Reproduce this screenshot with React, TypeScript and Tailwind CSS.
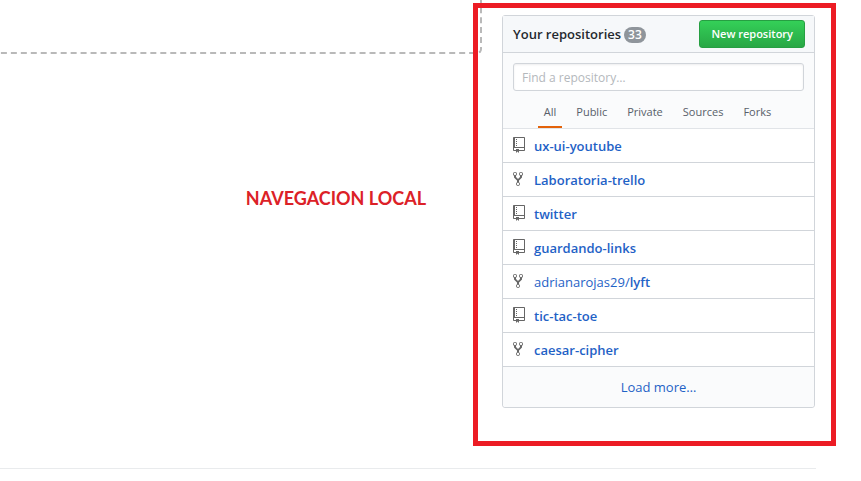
type Repo = { name: string; owner?: string; fork?: boolean };

const repos: Repo[] = [
  { name: "ux-ui-youtube" },
  { name: "Laboratoria-trello", fork: true },
  { name: "twitter" },
  { name: "guardando-links" },
  { name: "lyft", owner: "adrianarojas29/", fork: true },
  { name: "tic-tac-toe" },
  { name: "caesar-cipher", fork: true },
];

const filters = ["All", "Public", "Private", "Sources", "Forks"];

function RepoIcon() {
  return (
    <svg width="12" height="16" viewBox="0 0 12 16" fill="currentColor" aria-hidden="true">
      <path d="M4 9H3V8h1v1zm0-3H3v1h1V6zm0-2H3v1h1V4zm0-2H3v1h1V2zm8-1v12c0 .55-.45 1-1 1H6v2l-1.5-1.5L3 16v-2H1c-.55 0-1-.45-1-1V1c0-.55.45-1 1-1h10c.55 0 1 .45 1 1zm-1 10H1v2h2v-1h3v1h5v-2zm0-10H2v9h9V1z" />
    </svg>
  );
}

function ForkIcon() {
  return (
    <svg width="10" height="16" viewBox="0 0 10 16" fill="currentColor" aria-hidden="true">
      <path d="M8 1a1.993 1.993 0 0 0-1 3.72V6L5 8 3 6V4.72A1.993 1.993 0 0 0 2 1a1.993 1.993 0 0 0-1 3.72V6.5l3 3v1.78A1.993 1.993 0 0 0 5 15a1.993 1.993 0 0 0 1-3.72V9.5l3-3V4.72A1.993 1.993 0 0 0 8 1zM2 4.2C1.34 4.2.8 3.65.8 3c0-.65.55-1.2 1.2-1.2.65 0 1.2.55 1.2 1.2 0 .65-.55 1.2-1.2 1.2zm3 10c-.66 0-1.2-.55-1.2-1.2 0-.65.55-1.2 1.2-1.2.65 0 1.2.55 1.2 1.2 0 .65-.55 1.2-1.2 1.2zm3-10c-.66 0-1.2-.55-1.2-1.2 0-.65.55-1.2 1.2-1.2.65 0 1.2.55 1.2 1.2 0 .65-.55 1.2-1.2 1.2z" />
    </svg>
  );
}

function RepoPanel() {
  return (
    <section className="rounded-[3px] border border-[#d1d5da] bg-white">
      <header className="flex h-[37px] items-center justify-between border-b border-[#d1d5da] bg-[#f6f8fa] pr-[9px] pl-[10px]">
        <h3 className="flex items-center gap-[3px] pt-px text-[13px] font-semibold text-[#24292e]">
          Your repositories
          <span className="rounded-full bg-[#8f959b] px-1 text-[12px] leading-4 text-white">33</span>
        </h3>
        <button
          type="button"
          className="h-7 rounded-[3px] border border-[#269f42] bg-linear-to-b from-[#34d058] to-[#28a745] px-[11px] pt-px text-[11px] font-semibold text-white"
        >
          New repository
        </button>
      </header>

      <div className="border-b border-[#e1e4e8] bg-[#fafbfc] px-[10px] pt-[10px]">
        <input
          type="text"
          aria-label="Find a repository"
          placeholder="Find a repository…"
          className="block h-7 w-full rounded-[3px] border border-[#d1d5da] bg-white px-2 text-[12px] text-[#24292e] shadow-[inset_0_1px_2px_rgba(27,31,35,0.075)] outline-none placeholder:text-[#b4b8bc]"
        />
        <nav className="mt-2 flex justify-center gap-2 pr-[2px] text-[11px] leading-[25px] text-[#586069]">
          {filters.map((label, i) => (
            <button
              key={label}
              type="button"
              className={`border-b-2 px-[6px] pb-[2px] ${i === 0 ? "border-[#e36209]" : "border-transparent"}`}
            >
              {label}
            </button>
          ))}
        </nav>
      </div>

      <ul>
        {repos.map((repo) => (
          <li key={repo.name} className="border-b border-[#d1d5da]">
            <a href="#" className="flex h-[33px] items-center px-[10px] pt-[2px] text-[13px] text-[#1f62c6]">
              <span className="w-[21px] pb-1 text-[#666666]">
                <span className="flex w-3">{repo.fork ? <ForkIcon /> : <RepoIcon />}</span>
              </span>
              <span>
                {repo.owner}
                <span className="font-semibold">{repo.name}</span>
              </span>
            </a>
          </li>
        ))}
      </ul>

      <button
        type="button"
        className="block h-10 w-full rounded-b-[3px] bg-[#fafbfc] pt-px text-[13px] text-[#1f62c6]"
      >
        Load more…
      </button>
    </section>
  );
}

export default function App() {
  return (
    <div className="overflow-hidden bg-white font-['Open_Sans','Noto_Sans',sans-serif]">
      <div className="flex pr-[25px]">
        <main className="min-w-0 flex-1">
          <div className="-mr-[9px] h-[54px] rounded-br-[5px] border-r-2 border-b-2 border-dashed border-[#b9b9b9]" />
          <p className="mt-[132px] pr-[47px] text-right font-['Lato','Noto_Sans',sans-serif] text-[18px] leading-6 font-bold text-[#dc2127]">
            NAVEGACION LOCAL
          </p>
        </main>
        <aside className="relative mt-[3px] w-[363px] shrink-0 border-[5px] border-[#ec1c24] pt-[7px] pr-4 pb-[33px] pl-6">
          <RepoPanel />
        </aside>
      </div>
      <hr className="mt-[22px] mr-[45px] border-t border-[#e9ebed]" />
    </div>
  );
}
